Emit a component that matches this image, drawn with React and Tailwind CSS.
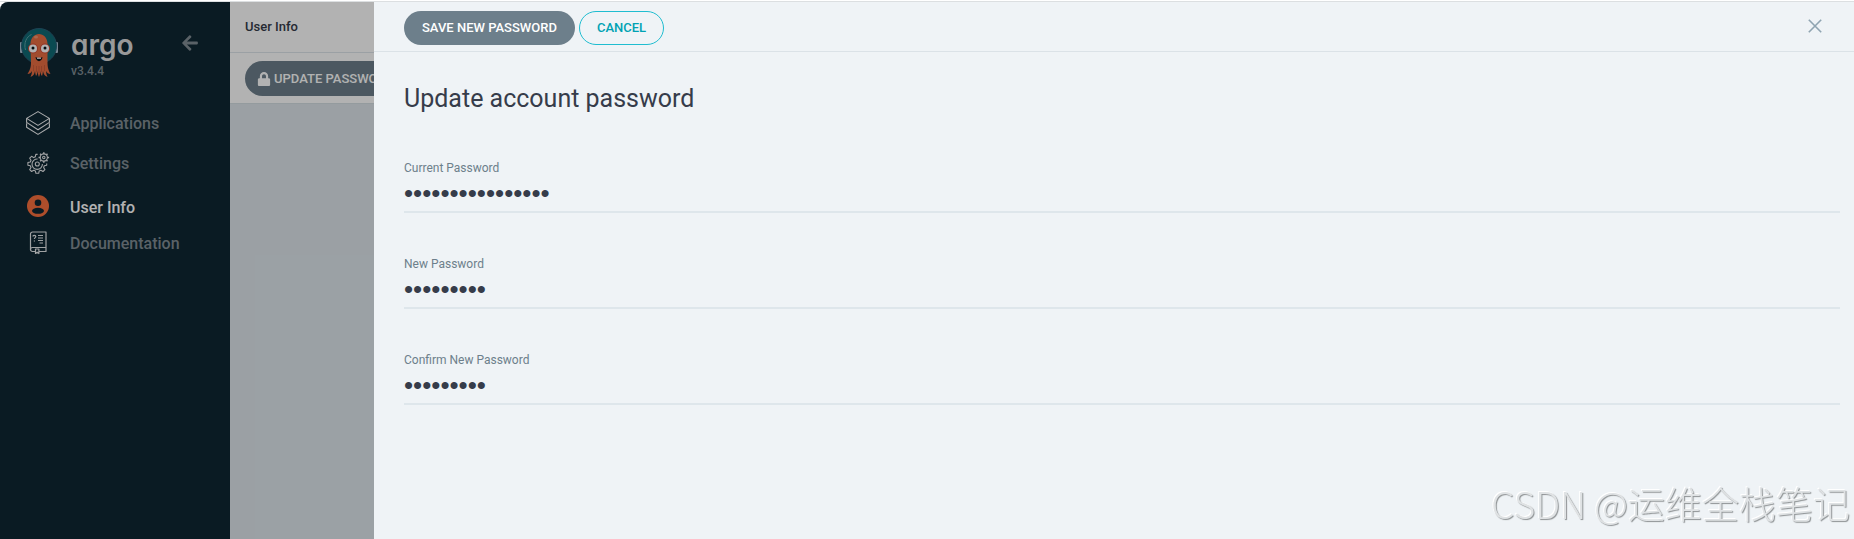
import { FaArrowLeft, FaLock } from "react-icons/fa";

const LayersIcon = () => (
  <svg viewBox="0 0 24 24" className="size-6" fill="none" stroke="#f4f6f7" strokeWidth="1.100" strokeLinejoin="round">
    <path d="M12 .6 23.400 7.400 12 14.400 .6 7.400z" />
    <path d="M.6 7.400v4L12 18.800l11.400-7.400v-4" />
    <path d="M.6 12.200v4L12 23.400l11.400-7.200v-4" />
  </svg>
);

const SettingsIcon = () => (
  <svg viewBox="0 0 24 24" className="size-6" fill="none" stroke="#e6e8ea" strokeWidth="1.100" strokeLinejoin="round">
    <path d="M11.600 3.400H9.800l-.5 2.400-1.600.8-2.100-1.300-1.900 1.900 1.300 2.100-.7 1.700-2.400.5v2.800l2.400.5.7 1.700-1.300 2.100 1.900 1.900 2.100-1.300 1.700.7.5 2.400h2.800l.5-2.400 1.700-.7 2.100 1.300 1.900-1.900-1.300-2.100.7-1.700 2.400-.5v-1.800" />
    <path d="M11.600 8a5.200 5.200 0 1 0 4.800 5" />
    <circle cx="11.300" cy="13" r="2" />
    <circle cx="17.800" cy="6.500" r="3.600" />
    <circle cx="17.800" cy="6.500" r="1.200" />
    <path
      d="M17.800 1.200v1.700M17.800 10.100v1.700M12.500 6.500h1.700M21.400 6.500h1.700M14.100 2.800l1.200 1.200M20.300 9l1.200 1.200M14.100 10.200 15.300 9M20.300 4l1.200-1.200"
      strokeWidth="1.500"
    />
  </svg>
);

const UserIcon = () => (
  <svg viewBox="0 0 24 24" className="size-6">
    <circle cx="12" cy="11" r="11" fill="#f9703e" />
    <circle cx="12" cy="7.700" r="3.300" fill="#0f2733" />
    <ellipse cx="12" cy="15.800" rx="6" ry="3" fill="#0f2733" />
  </svg>
);

const DocsIcon = () => (
  <svg viewBox="0 0 24 24" className="size-6" fill="none" stroke="#e6e8ea" strokeWidth="1.200" strokeLinejoin="round">
    <path d="M9.500 20.500H6.500a2 2 0 0 1-2-2V3a2 2 0 0 1 2-2h13.500v19.500h-7" />
    <path d="M4.500 18.500a2 2 0 0 1 2-2H20" />
    <path d="M9.500 18v4.500l1.700-1.300 1.700 1.300V18z" />
    <path d="M7 5.500c0-1.600 2.800-1.600 2.800 0 0 1.200-1.400 1.100-1.400 2.600M8.400 9.500v1M12 4.500h5M12 7h5M12 9.500h5M13.500 12H17" />
  </svg>
);

const ArgoMascot = () => (
  <svg viewBox="0 0 40 52" className="h-[52px] w-10">
    <rect x="1" y="15" width="3" height="11" rx="1" fill="#a9bfd0" />
    <rect x="36" y="15" width="3" height="11" rx="1" fill="#a9bfd0" />
    <circle cx="20" cy="19" r="17.500" fill="#0f6a74" stroke="#2b6078" />
    <path d="M6.500 23c-2-7 1-13.500 6-15.500" fill="none" stroke="#5fa3a9" />
    <path
      d="M11.500 17c0-13.500 17-13.500 17 0v19c0 6 2 9 3 11-2 0-3.500-1-4.500-3 0 2 .5 4 1.500 6-3-1-4-3-4.500-6-.2 2-.5 3.500-1 5-1.200-1-1.500-3-1.500-5-.5 3-1 5-1.500 6-.6-1-1-3-1.500-6 0 2-.5 4-1.500 5-.5-1.500-.8-3-1-5-.5 3-1.500 5-4.500 6 1-2 1.500-4 1.500-6-1 2-2.500 3-4.500 3 1-2 3.500-5 3.500-11z"
      fill="#e96d43"
    />
    <path d="M14.500 38v6M17.500 39v6M20 39v7M22.500 39v6M25.500 38v6" stroke="#c4593b" strokeWidth=".8" />
    <ellipse cx="17" cy="10" rx="2" ry="1.500" fill="#f3966f" />
    <circle cx="14" cy="21.500" r="5" fill="#d14b34" />
    <circle cx="26" cy="21.500" r="5" fill="#d14b34" />
    <circle cx="14" cy="21.500" r="4" fill="#fff" />
    <circle cx="26" cy="21.500" r="4" fill="#fff" />
    <circle cx="14" cy="21" r="1.500" fill="#06141b" />
    <circle cx="26" cy="21" r="1.500" fill="#06141b" />
    <path d="M16.500 30c2 1.200 5 1.200 7 0-.5 5.500-6.500 5.500-7 0z" fill="#06141b" />
    <path d="M18 30.600h4v1.200h-4z" fill="#fff" />
  </svg>
);

const CloseIcon = () => (
  <svg viewBox="0 0 14 14" className="size-[14px]" fill="none" stroke="#8fa4b1" strokeWidth="1.600">
    <path d="m.8.8 12.400 12.400M13.200.8.8 13.200" />
  </svg>
);

const navItems = [
  { title: "Applications", icon: <LayersIcon />, row: "h-10 text-[#818d94]" },
  { title: "Settings", icon: <SettingsIcon />, row: "h-10 text-[#818d94]" },
  { title: "User Info", icon: <UserIcon />, row: "h-12 text-white" },
  { title: "Documentation", icon: <DocsIcon />, row: "h-6 text-[#818d94]" },
];

const fields = [
  { id: "current", label: "Current Password", value: "0123456789abcdef" },
  { id: "new", label: "New Password", value: "012345678" },
  { id: "confirm", label: "Confirm New Password", value: "012345678" },
];

function Sidebar() {
  return (
    <aside className="w-[230px] shrink-0 rounded-tl-lg bg-[#0f2733]">
      <div className="flex items-start px-[19px] pt-[25px]">
        <ArgoMascot />
        <div className="ml-3 flex-1">
          <div className="[font-family:Inter,sans-serif] text-[28px] leading-9 font-semibold text-[#dcdcdc] [font-feature-settings:'cv11'_1]">
            argo
          </div>
          <div className="text-[12px] leading-4 font-medium text-[#818d94]">v3.4.4</div>
        </div>
        <button aria-label="Collapse sidebar" className="mt-[7px] mr-3 text-[#818d94]">
          <FaArrowLeft className="size-[18px]" />
        </button>
      </div>
      <nav className="mt-6 pl-[26px]">
        {navItems.map((item) => (
          <a key={item.title} href="#" className={`flex items-center gap-5 text-[16px] font-medium ${item.row}`}>
            {item.icon}
            <span className="pt-px">{item.title}</span>
          </a>
        ))}
      </nav>
    </aside>
  );
}

function UserInfoPage() {
  return (
    <main className="min-w-0 flex-1 bg-[#dee6eb]">
      <div className="flex h-[51px] items-center border-b border-[#dee6eb] bg-white px-[15px] text-[13px] font-medium text-[#363c4a]">
        User Info
      </div>
      <div className="flex h-[51px] items-center border-b border-[#d5dee3] bg-white px-[15px] pt-px">
        <button className="flex h-[35px] items-center gap-[3px] rounded-full bg-[#6d7f8b] px-3 text-[13px] font-medium text-white">
          <FaLock className="size-[14px]" />
          UPDATE PASSWORD
        </button>
      </div>
    </main>
  );
}

function PasswordPanel() {
  return (
    <section className="fixed top-[2px] right-0 bottom-0 left-[374px] bg-[#eff3f6]">
      <div className="flex h-[50px] items-center gap-1 border-b border-[#dbe2e7] pt-[3px] pr-8 pl-[30px]">
        <button className="h-[34px] rounded-full bg-[#6d7f8b] px-[18px] text-[13px] font-medium text-white">
          SAVE NEW PASSWORD
        </button>
        <button className="h-[34px] rounded-full border border-[#1fbdd0] px-[17px] text-[13px] font-medium text-[#00a2b3]">
          CANCEL
        </button>
        <button aria-label="Close" className="mb-1 ml-auto">
          <CloseIcon />
        </button>
      </div>
      <form className="pt-[29px] pr-[14px] pl-[30px]">
        <h4 className="text-[25px] leading-9 text-[#363c4a]">Update account password</h4>
        {fields.map((field) => (
          <div key={field.id} className="h-24 pt-[43px]">
            <label htmlFor={field.id} className="block text-[12px] leading-4 text-[#6d7f8b]">
              {field.label}
            </label>
            <input
              id={field.id}
              type="password"
              defaultValue={field.value}
              className="block h-[37px] w-full border-b-2 border-[#dee6eb] bg-transparent pb-px font-['Liberation_Sans',sans-serif] text-[26px] text-[#363c4a] outline-none"
            />
          </div>
        ))}
      </form>
    </section>
  );
}

export default function App() {
  return (
    <div className="flex min-h-screen flex-col bg-white font-['Roboto',sans-serif]">
      <div className="h-[2px] border-b border-[#dcdfe1]" />
      <div className="relative flex flex-1">
        <Sidebar />
        <UserInfoPage />
        <div className="absolute inset-0 rounded-tl-lg bg-black/30" />
      </div>
      <PasswordPanel />
      <div className="pointer-events-none fixed right-1 bottom-3 font-['Noto_Sans_CJK_SC',sans-serif] text-[37px] leading-[48px] font-light text-[#dfe2e4] [text-shadow:1px_1px_1px_#8d9193,-1px_-1px_0_#fff]">
        CSDN @运维全栈笔记
      </div>
    </div>
  );
}
